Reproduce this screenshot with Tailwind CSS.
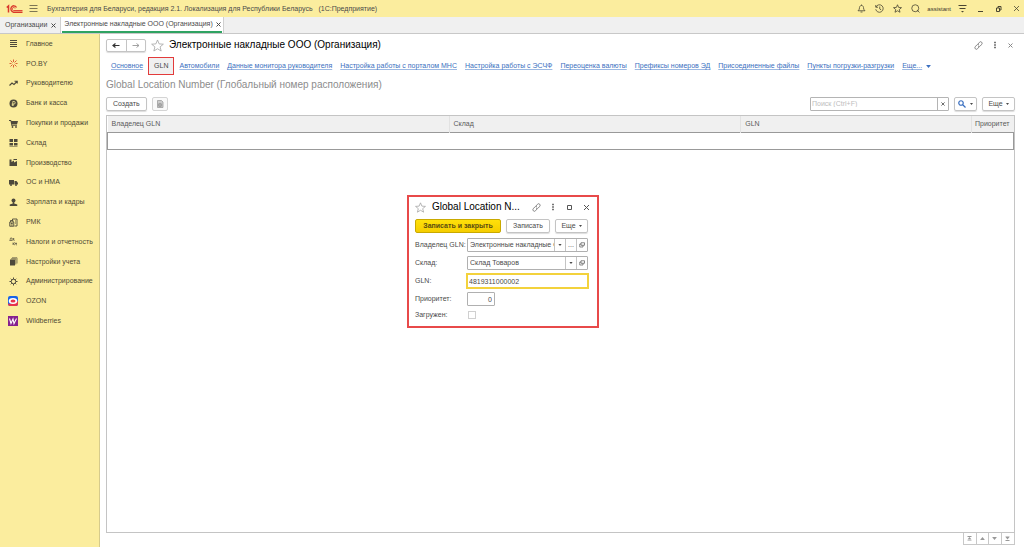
<!DOCTYPE html>
<html lang="ru">
<head>
    <meta charset="UTF-8">
    <meta name="viewport" content="width=device-width, initial-scale=1.0">
    <title>Электронные накладные ООО (Организация)</title>
    <script src="https://cdn.jsdelivr.net/npm/@tailwindcss/browser@4"></script>
</head>
<body class="flex h-screen flex-col overflow-hidden bg-white font-['Liberation_Sans',Arial,sans-serif] text-[7px] leading-[10px] text-[#4a4a4a]">

    <!-- Shared icons -->
    <svg class="hidden">
        <symbol id="star" viewBox="0 0 16 16"><path d="M8 1.200l2 4.800 5.200.4-4 3.300 1.300 5.100L8 12l-4.500 2.800L4.800 9.700l-4-3.300L6 6z" fill="none" stroke="currentColor" stroke-linejoin="round"/></symbol>
        <symbol id="link" viewBox="0 0 18 18"><path d="M8 6l3-3.500a3 3 0 0 1 4.500 4L12.500 10a3 3 0 0 1-4.500 0M10 12l-3 3.500a3 3 0 0 1-4.500-4L5.500 8A3 3 0 0 1 10 8" fill="none" stroke="currentColor" stroke-width="1.500"/></symbol>
        <symbol id="dots" viewBox="0 0 8 16"><path d="M2.500 1.500h3v3h-3zM2.500 6.500h3v3h-3zM2.500 11.500h3v3h-3z" fill="currentColor"/></symbol>
        <symbol id="cross" viewBox="0 0 10 10"><path d="M1 1l8 8M9 1L1 9" fill="none" stroke="currentColor" stroke-width="2"/></symbol>
        <symbol id="caret" viewBox="0 0 8 5"><path d="M0 0h8L4 5z" fill="currentColor"/></symbol>
        <symbol id="open" viewBox="0 0 12 12"><path d="M4 1.500h7v5H4zM4 4H1.500v6H8V6.500" fill="none" stroke="currentColor" stroke-width="1.300"/></symbol>
    </svg>

    <!-- Title bar -->
    <header class="flex h-[17px] shrink-0 items-center bg-[#fbed9e] pl-[6px] pr-[3px]">
        <svg class="h-[10px] w-[18px]" viewBox="0 0 36 20" fill="none" stroke="#d9382b">
            <path d="M1.500 7L5 4v13" stroke-width="3"/>
            <path d="M21 7a6 6.500 0 1 0-6 9.500H33" stroke-width="2.600"/>
            <path d="M18 9a3 3 0 1 0-3 4H33" stroke-width="1.800"/>
        </svg>
        <button class="ml-[5px]" aria-label="Меню">
            <svg class="h-[9px] w-[9px]" viewBox="0 0 9 9" stroke="#7d7654"><path d="M.5 1.500h8M.5 4.500h8M.5 7.500h8"/></svg>
        </button>
        <span class="ml-[9px] grow whitespace-pre">Бухгалтерия для Беларуси, редакция 2.1. Локализация для Республики Беларусь   (1С:Предприятие)</span>
        <div class="flex items-center gap-[9px]">
            <button aria-label="Уведомления"><svg class="h-[9px] w-[9px]" viewBox="0 0 18 18" fill="none" stroke="#4a4633" stroke-width="1.600"><path d="M2 13.500h14l-2.500-3C13 5 12 3 9 3s-4 2-4.500 7.500zM9 1v2M7 16h4"/></svg></button>
            <button aria-label="История"><svg class="h-[9px] w-[9px]" viewBox="0 0 18 18" fill="none" stroke="#4a4633" stroke-width="1.600"><path d="M2 6a7.500 7.500 0 1 1-.5 4.500M1.500 2v4.500H6M9.500 5v5l3 2"/></svg></button>
            <button aria-label="Избранное"><svg class="h-[9px] w-[9px]" viewBox="0 0 18 18" fill="none" stroke="#4a4633" stroke-width="1.600"><path d="M9 1.500l2.200 5.300 5.800.5-4.400 3.700 1.400 5.500-5-3-5 3 1.400-5.500L1 7.300l5.800-.5z"/></svg></button>
            <button aria-label="Поиск"><svg class="h-[9px] w-[9px]" viewBox="0 0 18 18" fill="none" stroke="#4a4633" stroke-width="1.600"><circle cx="8.500" cy="8.500" r="7"/><path d="M12 12l5 5"/></svg></button>
            <span class="-mx-[2px] text-[6px] text-[#3c3a2e]">assistant</span>
            <button aria-label="Настройки"><svg class="h-[9px] w-[9px]" viewBox="0 0 9 9" stroke="#4a4633" fill="#4a4633"><path d="M.5 1.500h8M1.500 4.500h6"/><path d="M3 7h3L4.500 8.500z" stroke="none"/></svg></button>
            <button aria-label="Свернуть"><svg class="h-[9px] w-[9px]" viewBox="0 0 9 9" stroke="#4a4633"><path d="M2 7.500h5"/></svg></button>
            <button aria-label="Развернуть"><svg class="h-[9px] w-[9px]" viewBox="0 0 9 9" fill="none" stroke="#4a4633"><path d="M2.500 4h3v3.500h-3zM4 4V2.500h3V6H5.500"/></svg></button>
            <button aria-label="Закрыть"><svg class="h-[9px] w-[9px]" viewBox="0 0 9 9" stroke="#4a4633" stroke-width=".8"><path d="M2 2l5 5M7 2L2 7"/></svg></button>
        </div>
    </header>

    <!-- Open windows -->
    <div class="flex h-[17px] shrink-0 border-b border-[#c8c8c8] bg-[#f0f0f0]">
        <button class="flex items-center gap-1 border-r border-[#d0d0d0] pl-[5px] pr-1">Организации <svg class="h-[5px] w-[5px]"><use href="#cross"/></svg></button>
        <button class="border-r border-[#d0d0d0] bg-white px-px">
            <span class="flex h-4 items-center gap-[3px] border-b-2 border-[#2fa362] pl-[2px] pr-px">Электронные накладные ООО (Организация) <svg class="h-[5px] w-[5px]"><use href="#cross"/></svg></span>
        </button>
    </div>

    <div class="flex min-h-0 grow">
        <!-- Sections -->
        <aside class="w-[100px] shrink-0 border-r border-[#d6cb8c] bg-[#fbed9e] text-[#4f4a35]">
            <nav class="grid h-[297px] auto-rows-fr">
                <a href="#" class="flex items-center gap-2 pl-[9px]"><svg class="h-[9px] w-[9px]" viewBox="0 0 18 18" stroke="#4d493b" stroke-width="2"><path d="M2 3h14M2 7h14M2 11h14M2 15h14"/></svg>Главное</a>
                <a href="#" class="flex items-center gap-2 pl-[9px]"><svg class="h-[9px] w-[9px]" viewBox="0 0 18 18" stroke="#d9502b" stroke-width="1.800"><path d="M9 1v5M9 12v5M1 9h4M13 9h4M3 3l4 4M15 3l-4 4M3 15l4-4M15 15l-4-4"/></svg>PO.BY</a>
                <a href="#" class="flex items-center gap-2 pl-[9px]"><svg class="h-[9px] w-[9px]" viewBox="0 0 18 18" fill="none" stroke="#4d493b" stroke-width="2.200"><path d="M1 13l5-5 4 3 6-6M11 4.500h5.500V9"/></svg>Руководителю</a>
                <a href="#" class="flex items-center gap-2 pl-[9px]"><svg class="h-[9px] w-[9px]" viewBox="0 0 18 18" fill="none"><circle cx="9" cy="9" r="8" fill="#4d493b"/><path d="M7.500 14V5H10a2.500 2.500 0 0 1 0 5H5.500M5.500 12H10" stroke="#fbed9e" stroke-width="1.500"/></svg>Банк и касса</a>
                <a href="#" class="flex items-center gap-2 pl-[9px]"><svg class="h-[9px] w-[9px]" viewBox="0 0 18 18" fill="#4d493b"><path d="M0 2h4l1 2h13l-2 7H6l.5 1.500H16V14H5L3 4H0z"/><circle cx="7" cy="16" r="1.800"/><circle cx="14" cy="16" r="1.800"/></svg>Покупки и продажи</a>
                <a href="#" class="flex items-center gap-2 pl-[9px]"><svg class="h-[9px] w-[9px]" viewBox="0 0 18 18" fill="#4d493b"><path d="M1 2h7v6H1zM10 2h7v6h-7zM1 10h7v5H1zM10 10h7v5h-7zM1 16h16v1H1z"/></svg>Склад</a>
                <a href="#" class="flex items-center gap-2 pl-[9px]"><svg class="h-[9px] w-[9px]" viewBox="0 0 18 18" fill="#4d493b"><path d="M1 16V3h4v5l5-3v4l6-3v10zM9 2h7v2H9z"/></svg>Производство</a>
                <a href="#" class="flex items-center gap-2 pl-[9px]"><svg class="h-[9px] w-[9px]" viewBox="0 0 18 18" fill="#4d493b"><path d="M0 4h10v9H0zM11 6h4l3 4v3h-7z"/><circle cx="4" cy="14" r="2"/><circle cx="14" cy="14" r="2"/></svg>ОС и НМА</a>
                <a href="#" class="flex items-center gap-2 pl-[9px]"><svg class="h-[9px] w-[9px]" viewBox="0 0 18 18" fill="#4d493b"><circle cx="9" cy="5" r="4"/><path d="M7.500 8h3v3l6 2v3h-15v-3l6-2z"/></svg>Зарплата и кадры</a>
                <a href="#" class="flex items-center gap-2 pl-[9px]"><svg class="h-[9px] w-[9px]" viewBox="0 0 18 18" fill="none" stroke="#4d493b" stroke-width="1.800"><path d="M7 5V2h9v14h-5M1.500 8h8v8.500h-8zM3 8V5h5v3M12 6h2M12 10h2M3.500 11h4M3.500 14h4"/></svg>РМК</a>
                <a href="#" class="flex items-center gap-2 pl-[9px]"><svg class="h-[9px] w-[9px]" viewBox="0 0 18 18" fill="none" stroke="#4d493b" stroke-width="1.300"><path d="M1 7h6M2 7l1-5h3v5M7 4h4M9 2v4q0 1 2 1M8 11v5M12 11l-4 2.500 4 2.500M12 13h4M14 11v4q0 1 2 1"/></svg>Налоги и отчетность</a>
                <a href="#" class="flex items-center gap-2 pl-[9px]"><svg class="h-[9px] w-[9px]" viewBox="0 0 18 18" fill="#4d493b"><path d="M2 5h10v12H2z"/><path d="M4 3.500h9.500V15M6 1.500h10V13" fill="none" stroke="#4d493b" stroke-width="1.300"/></svg>Настройки учета</a>
                <a href="#" class="flex items-center gap-2 pl-[9px]"><svg class="h-[9px] w-[9px]" viewBox="0 0 18 18" fill="none" stroke="#4d493b" stroke-width="2"><circle cx="9" cy="9" r="4.500"/><path d="M9 1v3M9 14v3M1 9h3M14 9h3M3.500 3.500l2 2M12.500 12.500l2 2M3.500 14.500l2-2M12.500 5.500l2-2"/></svg>Администрирование</a>
                <a href="#" class="flex items-center gap-2 pl-2"><svg class="h-[10px] w-[10px]" viewBox="0 0 20 20"><rect width="20" height="20" rx="4" fill="#1763e8"/><path d="M0 15q8 2 20-5v6q0 4-4 4H4q-4 0-4-4z" fill="#e8324a"/><ellipse cx="10" cy="10" rx="8.500" ry="6" fill="#fff"/><ellipse cx="10" cy="10" rx="5" ry="3" fill="#e8324a"/></svg>OZON</a>
                <a href="#" class="flex items-center gap-2 pl-2"><svg class="h-[10px] w-[10px]" viewBox="0 0 20 20"><rect width="20" height="20" fill="#86218f"/><path d="M3 5l3 10 4-9 2 9 5-10" fill="none" stroke="#fff" stroke-width="2.200"/></svg>Wildberries</a>
            </nav>
        </aside>

        <main class="flex min-w-0 grow flex-col pb-[2px] pl-[6px] pr-[9px] pt-1">
            <!-- Form heading -->
            <div class="flex h-[14px] items-center">
                <div class="flex h-[13px] w-10 rounded-[2px] border border-[#c4c4c4] shadow-[0_1px_1px_#ddd]">
                    <button class="flex flex-1 items-center justify-center border-r border-[#c4c4c4]" aria-label="Назад"><svg class="h-[7px] w-2" viewBox="0 0 16 14" fill="none" stroke="#333" stroke-width="2.400"><path d="M15 7H2M7 3L2 7l5 4"/></svg></button>
                    <button class="flex flex-1 items-center justify-center" aria-label="Вперед"><svg class="h-[7px] w-2" viewBox="0 0 16 14" fill="none" stroke="#999" stroke-width="1.800"><path d="M1 7h13M9 3l5 4-5 4"/></svg></button>
                </div>
                <button class="ml-[5px]" aria-label="В избранное"><svg class="h-[13px] w-[13px] text-[#a5a5a5]"><use href="#star"/></svg></button>
                <h1 class="ml-[5px] grow text-[10px] text-black">Электронные накладные ООО (Организация)</h1>
                <button aria-label="Ссылка"><svg class="h-[9px] w-[9px] text-[#666]"><use href="#link"/></svg></button>
                <button class="ml-[10px]" aria-label="Еще"><svg class="h-2 w-1"><use href="#dots"/></svg></button>
                <button class="ml-[11px] mr-[2px]" aria-label="Закрыть"><svg class="h-[5px] w-[5px] text-[#888]"><use href="#cross"/></svg></button>
            </div>

            <nav class="mt-[5px] flex h-[18px] items-center gap-2 whitespace-nowrap pl-[5px] text-[#3a6fc0]">
                <a href="#" class="underline decoration-[#9db9e2] underline-offset-1">Основное</a>
                <a href="#" class="-mx-[3px] flex h-[18px] items-center border border-[#e23b3b] bg-[#f0f0f0] px-[5px] text-[#4a4a4a]">GLN</a>
                <a href="#" class="underline decoration-[#9db9e2] underline-offset-1">Автомобили</a>
                <a href="#" class="underline decoration-[#9db9e2] underline-offset-1">Данные монитора руководителя</a>
                <a href="#" class="underline decoration-[#9db9e2] underline-offset-1">Настройка работы с порталом МНС</a>
                <a href="#" class="underline decoration-[#9db9e2] underline-offset-1">Настройка работы с ЭСЧФ</a>
                <a href="#" class="underline decoration-[#9db9e2] underline-offset-1">Переоценка валюты</a>
                <a href="#" class="underline decoration-[#9db9e2] underline-offset-1">Префиксы номеров ЭД</a>
                <a href="#" class="underline decoration-[#9db9e2] underline-offset-1">Присоединенные файлы</a>
                <a href="#" class="underline decoration-[#9db9e2] underline-offset-1">Пункты погрузки-разгрузки</a>
                <a href="#" class="flex items-center gap-1 underline decoration-[#9db9e2] underline-offset-1">Еще... <svg class="h-[3px] w-[5px]"><use href="#caret"/></svg></a>
            </nav>

            <h2 class="mt-[3px] text-[10px] leading-[13px] text-[#8c8c8c]">Global Location Number (Глобальный номер расположения)</h2>

            <!-- List commands -->
            <div class="mt-[6px] flex h-[14px] items-stretch">
                <button class="rounded-[2px] border border-[#c4c4c4] px-[6px] shadow-[0_1px_1px_#ddd]">Создать</button>
                <button class="ml-[5px] flex w-4 items-center justify-center rounded-[2px] border border-[#d4d4d4] bg-[#fafafa]" aria-label="Скопировать"><svg class="h-2 w-2" viewBox="0 0 16 16" fill="#ccc" stroke="#999" stroke-width="1.500"><path d="M3 1h8l3 3v11H3z"/><circle cx="8" cy="10" r="3.500" fill="#aaa"/></svg></button>
                <div class="ml-auto flex w-[139px] rounded-[1px] border border-[#b4b4b4]">
                    <input type="text" aria-label="Поиск" placeholder="Поиск (Ctrl+F)" class="min-w-0 grow px-px placeholder:text-[#bdbdbd]">
                    <button class="flex w-[11px] items-center justify-center border-l border-[#b4b4b4]" aria-label="Очистить"><svg class="h-1 w-1"><use href="#cross"/></svg></button>
                </div>
                <button class="ml-[5px] flex w-[23px] items-center justify-center gap-1 rounded-[2px] border border-[#c4c4c4] shadow-[0_1px_1px_#ddd]" aria-label="Найти">
                    <svg class="h-2 w-2" viewBox="0 0 16 16" fill="none" stroke="#3a6fc0" stroke-width="2.400"><circle cx="6" cy="6" r="4.500"/><path d="M9.500 9.500L15 15"/></svg>
                    <svg class="h-[2px] w-[3px]"><use href="#caret"/></svg>
                </button>
                <button class="ml-[5px] flex w-[33px] items-center justify-center gap-[3px] rounded-[2px] border border-[#c4c4c4] shadow-[0_1px_1px_#ddd]">Еще <svg class="h-[2px] w-[3px]"><use href="#caret"/></svg></button>
            </div>

            <!-- List -->
            <div class="mt-1 grow border border-[#c4c4c4]">
                <table class="w-full table-fixed border-collapse">
                    <thead>
                        <tr class="h-4 bg-[#f0f0f0] text-left text-[#5a5a5a]">
                            <th class="w-[37.7%] border-r border-[#e2e2e2] pl-1 font-normal">Владелец GLN</th>
                            <th class="w-[32.2%] border-r border-[#e2e2e2] pl-1 font-normal">Склад</th>
                            <th class="w-[25.5%] border-r border-[#e2e2e2] pl-1 font-normal">GLN</th>
                            <th class="pr-1 text-right font-normal">Приоритет</th>
                        </tr>
                    </thead>
                    <tbody>
                        <tr class="h-[17px]"><td colspan="4" class="border border-[#999]"></td></tr>
                    </tbody>
                </table>
            </div>
            <div class="flex h-3 justify-end">
                <div class="grid w-[52px] grid-cols-4 divide-x divide-[#c8c8c8] border border-t-0 border-[#c8c8c8] text-[#999]">
                    <button class="flex items-center justify-center" aria-label="В начало"><svg class="h-[5px] w-[5px]" viewBox="0 0 10 10" fill="currentColor"><path d="M1 0h8v2H1zM5 2l4 5H1zM1 8h8v1H1z"/></svg></button>
                    <button class="flex items-center justify-center" aria-label="Вверх"><svg class="h-[3px] w-[5px] rotate-180"><use href="#caret"/></svg></button>
                    <button class="flex items-center justify-center" aria-label="Вниз"><svg class="h-[3px] w-[5px]"><use href="#caret"/></svg></button>
                    <button class="flex items-center justify-center" aria-label="В конец"><svg class="h-[5px] w-[5px]" viewBox="0 0 10 10" fill="currentColor"><path d="M1 0h8v1H1zM1 2h8L5 7zM1 8h8v2H1z"/></svg></button>
                </div>
            </div>
        </main>
    </div>

    <!-- GLN record window -->
    <section role="dialog" aria-labelledby="dialog-title" class="absolute left-[407px] top-[195px] w-[192px] border-2 border-[#e84a4a] bg-white pb-[6px] pl-[6px] pr-[9px] pt-[3px]">
        <div class="flex h-[14px] items-center">
            <button aria-label="В избранное"><svg class="h-[11px] w-[11px] text-[#999]"><use href="#star"/></svg></button>
            <h2 id="dialog-title" class="ml-[6px] grow text-[10px] text-black">Global Location N...</h2>
            <button aria-label="Ссылка"><svg class="h-[9px] w-[9px] text-[#666]"><use href="#link"/></svg></button>
            <button class="ml-[10px]" aria-label="Еще"><svg class="h-2 w-1"><use href="#dots"/></svg></button>
            <button class="ml-[11px]" aria-label="Развернуть"><svg class="h-[7px] w-[7px]" viewBox="0 0 7 7" fill="none" stroke="#555"><path d="M1.500 1.500h4v4h-4z"/></svg></button>
            <button class="ml-[10px] -mr-[2px]" aria-label="Закрыть"><svg class="h-[7px] w-[7px]" viewBox="0 0 7 7" stroke="#555"><path d="M1 1l5 5M6 1L1 6"/></svg></button>
        </div>
        <div class="mt-[5px] flex h-[14px] gap-[5px]">
            <button class="w-[86px] rounded-[2px] border border-[#c9a900] bg-gradient-to-b from-[#ffe10a] to-[#f5cd00] font-bold text-[#5a4d10]">Записать и закрыть</button>
            <button class="w-11 rounded-[2px] border border-[#c4c4c4] shadow-[0_1px_1px_#ddd]">Записать</button>
            <button class="flex w-[33px] items-center justify-center gap-[3px] rounded-[2px] border border-[#c4c4c4] shadow-[0_1px_1px_#ddd]">Еще <svg class="h-[2px] w-[3px]"><use href="#caret"/></svg></button>
        </div>
        <form class="mt-[5px] grid grid-cols-[52px_minmax(0,1fr)] items-center gap-y-1">
            <label for="owner">Владелец GLN:</label>
            <div class="flex h-[14px] rounded-[1px] border border-[#b0b0b0]">
                <input id="owner" type="text" value="Электронные накладные ООО" class="min-w-0 grow pl-[2px]">
                <button type="button" class="flex w-[11px] shrink-0 items-center justify-center border-l border-[#c4c4c4]" aria-label="Выбрать"><svg class="h-[2px] w-1"><use href="#caret"/></svg></button>
                <button type="button" class="w-[11px] shrink-0 border-l border-[#c4c4c4]" aria-label="Показать все">...</button>
                <button type="button" class="flex w-[11px] shrink-0 items-center justify-center border-l border-[#c4c4c4]" aria-label="Открыть"><svg class="h-[6px] w-[6px]"><use href="#open"/></svg></button>
            </div>
            <label for="store">Склад:</label>
            <div class="flex h-[14px] rounded-[1px] border border-[#b0b0b0]">
                <input id="store" type="text" value="Склад Товаров" class="min-w-0 grow pl-[2px]">
                <button type="button" class="flex w-[11px] shrink-0 items-center justify-center border-l border-[#c4c4c4]" aria-label="Выбрать"><svg class="h-[2px] w-1"><use href="#caret"/></svg></button>
                <button type="button" class="flex w-[11px] shrink-0 items-center justify-center border-l border-[#c4c4c4]" aria-label="Открыть"><svg class="h-[6px] w-[6px]"><use href="#open"/></svg></button>
            </div>
            <label for="gln">GLN:</label>
            <input id="gln" type="text" value="4819311000002" class="-m-px h-4 border-2 border-[#f3d23c] pl-px">
            <label for="priority">Приоритет:</label>
            <input id="priority" type="text" value="0" class="h-[14px] w-7 rounded-[1px] border border-[#b0b0b0] pr-[2px] text-right">
            <label for="loaded">Загружен:</label>
            <input id="loaded" type="checkbox" class="ml-px h-2 w-2 appearance-none border border-[#d0d0d0]">
        </form>
    </section>
</body>
</html>
